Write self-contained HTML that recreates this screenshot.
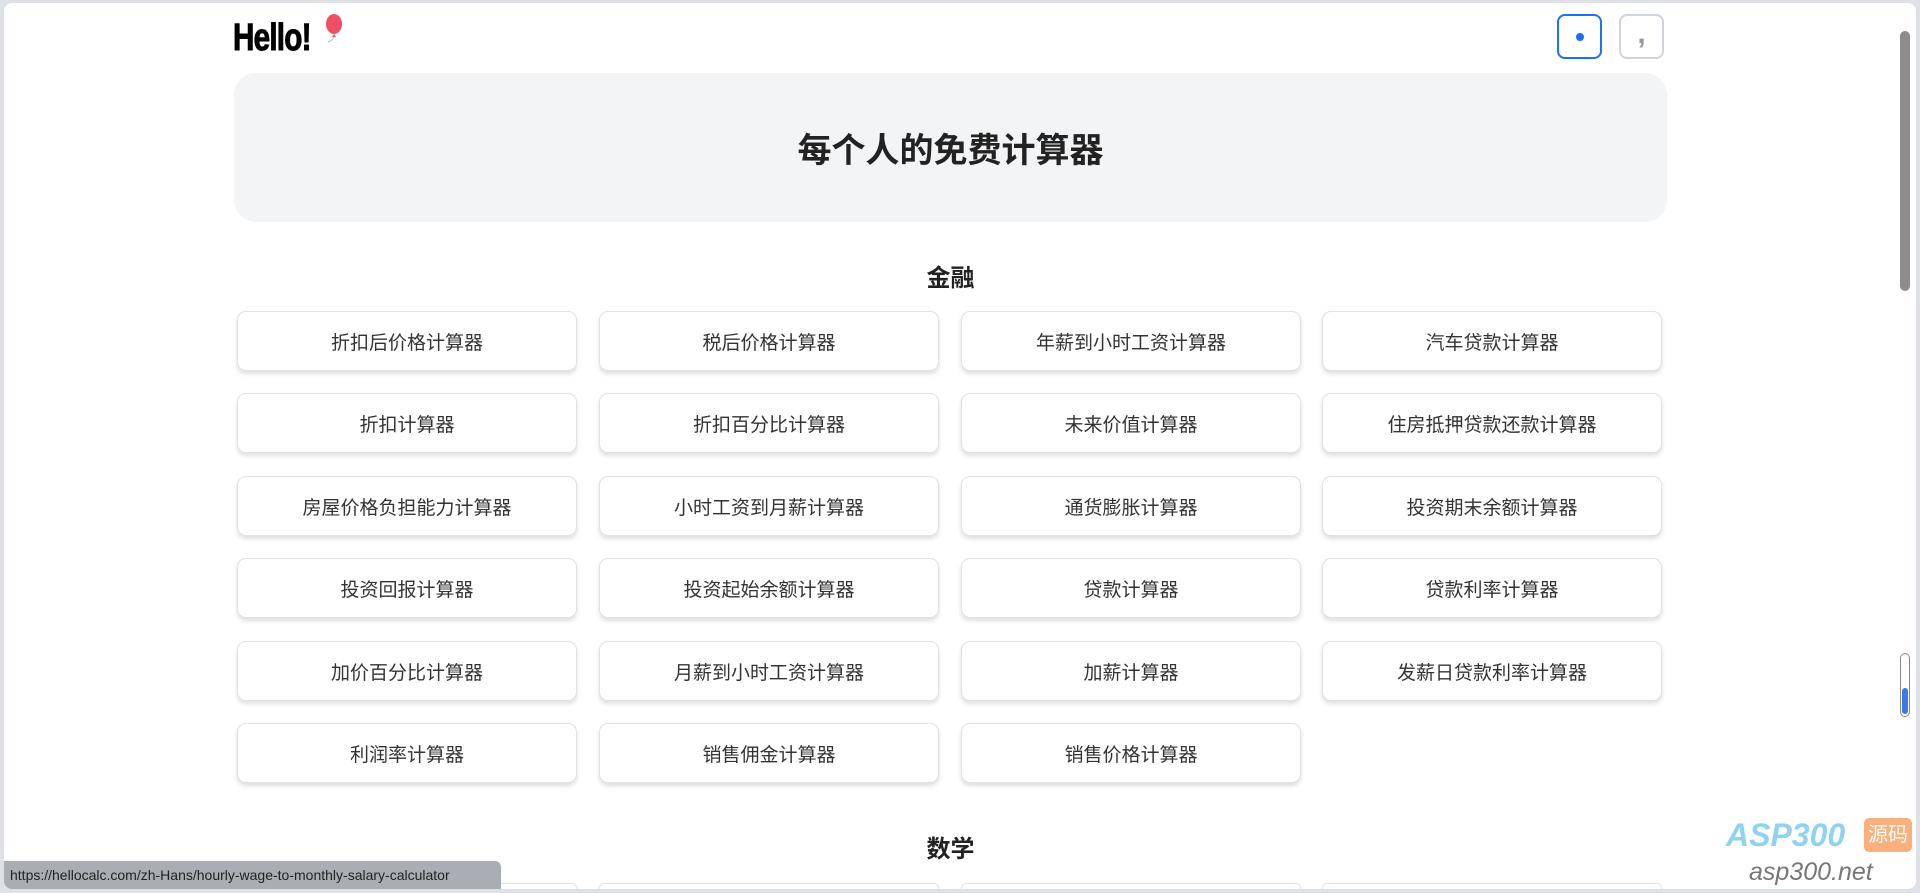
<!DOCTYPE html>
<html><head><meta charset="utf-8"><style>
html,body{margin:0;padding:0;width:1920px;height:893px;overflow:hidden;background:#dee1e6;font-family:"Liberation Sans","Noto Sans CJK SC",sans-serif;}
.win{position:absolute;left:4px;top:3px;width:1912px;height:886px;background:#fff;border-radius:8px;overflow:hidden;}
.a{position:absolute;}
.hello{left:229px;top:14px;font-family:"Liberation Sans",sans-serif;font-weight:bold;font-size:38px;letter-spacing:-1px;transform:scaleX(0.78);transform-origin:left;color:#000;-webkit-text-stroke:1px #000;}
.btn{width:45px;height:45px;border-radius:8px;box-sizing:border-box;}
.hero{left:230px;top:70px;width:1433px;height:149px;background:#f3f4f6;border-radius:22px;}
.title{left:230px;width:1433px;text-align:center;font-size:34px;font-weight:bold;color:#222;}
.h2{left:230px;width:1433px;text-align:center;font-size:24px;font-weight:bold;color:#222;}
.card{width:340px;height:60px;border:1px solid #e2e2e2;border-radius:9px;box-sizing:border-box;box-shadow:0 3px 5px rgba(0,0,0,0.13);background:#fff;text-align:center;line-height:64px;font-size:19px;color:#333;}
</style></head><body><div class="win">
<div class="a hello">Hello!</div>
<svg class="a" style="left:318px;top:11px" width="24" height="30" viewBox="0 0 24 30"><ellipse cx="12" cy="10" rx="8" ry="10" fill="#ee4f64"/><path d="M12 20 L10 23 L14 23 Z" fill="#ee4f64"/><path d="M12 23 Q10 27 6 28" stroke="#bbb" fill="none"/></svg>
<div class="a btn" style="left:1553px;top:11px;border:2px solid #1a73f5"><div class="a" style="left:17px;top:17px;width:8px;height:8px;border-radius:50%;background:#1a6df5"></div></div>
<div class="a btn" style="left:1615px;top:11px;border:2px solid #d1d5db;color:#999;font-size:30px;font-weight:bold;text-align:center;line-height:36px">,</div>
<div class="a hero"></div>
<div class="a title" style="top:120px">每个人的免费计算器</div>
<div class="a h2" style="top:255px">金融</div>
<div class="a card" style="left:233px;top:308px">折扣后价格计算器</div>
<div class="a card" style="left:595px;top:308px">税后价格计算器</div>
<div class="a card" style="left:957px;top:308px">年薪到小时工资计算器</div>
<div class="a card" style="left:1318px;top:308px">汽车贷款计算器</div>
<div class="a card" style="left:233px;top:390px">折扣计算器</div>
<div class="a card" style="left:595px;top:390px">折扣百分比计算器</div>
<div class="a card" style="left:957px;top:390px">未来价值计算器</div>
<div class="a card" style="left:1318px;top:390px">住房抵押贷款还款计算器</div>
<div class="a card" style="left:233px;top:473px">房屋价格负担能力计算器</div>
<div class="a card" style="left:595px;top:473px">小时工资到月薪计算器</div>
<div class="a card" style="left:957px;top:473px">通货膨胀计算器</div>
<div class="a card" style="left:1318px;top:473px">投资期末余额计算器</div>
<div class="a card" style="left:233px;top:555px">投资回报计算器</div>
<div class="a card" style="left:595px;top:555px">投资起始余额计算器</div>
<div class="a card" style="left:957px;top:555px">贷款计算器</div>
<div class="a card" style="left:1318px;top:555px">贷款利率计算器</div>
<div class="a card" style="left:233px;top:638px">加价百分比计算器</div>
<div class="a card" style="left:595px;top:638px">月薪到小时工资计算器</div>
<div class="a card" style="left:957px;top:638px">加薪计算器</div>
<div class="a card" style="left:1318px;top:638px">发薪日贷款利率计算器</div>
<div class="a card" style="left:233px;top:720px">利润率计算器</div>
<div class="a card" style="left:595px;top:720px">销售佣金计算器</div>
<div class="a card" style="left:957px;top:720px">销售价格计算器</div>
<div class="a h2" style="top:826px">数学</div>
<div class="a card" style="left:233px;top:880px;height:10px"></div>
<div class="a card" style="left:595px;top:880px;height:10px"></div>
<div class="a card" style="left:957px;top:880px;height:10px"></div>
<div class="a card" style="left:1318px;top:880px;height:10px"></div>
<div class="a" style="left:1896px;top:28px;width:10px;height:260px;background:#8c8c8c;border-radius:5px"></div>
<div class="a" style="left:1896px;top:650px;width:10px;height:64px;border:1px solid #888;border-radius:5px;box-sizing:border-box"></div>
<div class="a" style="left:1898px;top:685px;width:6px;height:26px;background:#3b7ae6;border-radius:3px"></div>
<div class="a" style="left:0;top:858px;width:497px;height:28px;background:#a9aeb5;border-radius:0 6px 0 0;font-size:14px;line-height:28px;padding-left:6px;box-sizing:border-box;color:#222">https://hellocalc.com/zh-Hans/hourly-wage-to-monthly-salary-calculator</div>
<div class="a" style="left:1722px;top:814px;font-size:32px;font-weight:bold;font-style:italic;color:#8fd3f0">ASP300</div>
<div class="a" style="left:1860px;top:815px;width:48px;height:34px;background:#f9b07c;border-radius:5px;color:#fff;font-size:20px;text-align:center;line-height:34px">源码</div>
<div class="a" style="left:1745px;top:855px;font-size:25px;font-style:italic;color:#777">asp300.net</div>
</div></body></html>
